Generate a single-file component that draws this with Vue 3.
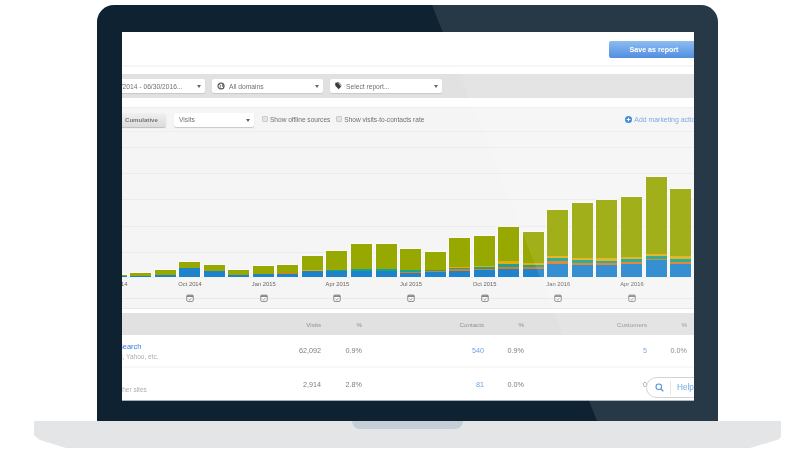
<script setup>
const bars = [
  [2, 1, 0, 0.5, 0], [4.5, 1.5, 0, 0, 0], [7, 2, 0.5, 0, 0], [15, 9.5, 0, 0, 0],
  [12.5, 6, 0.5, 0, 0], [7, 2, 0, 0.5, 0], [11, 3, 0.5, 0, 0], [12.5, 3, 1, 0, 0],
  [21, 6, 0, 0, 1], [26, 6, 0, 1, 0], [33.5, 6.5, 0, 1.5, 0], [33, 6.5, 0, 1.5, 0],
  [28.5, 4.5, 1, 1.5, 0], [25.5, 5, 1, 1.5, 0], [39, 6.5, 1.5, 1.5, 1], [41.5, 7, 1, 2, 1],
  [50.5, 8, 2, 3.5, 2.5], [45, 8, 2, 2, 2], [67.5, 13, 3, 3, 2], [74, 12, 2.5, 2.5, 2],
  [77, 12.5, 1.5, 2.5, 3], [80, 13, 2.5, 2.5, 2.5], [100.5, 17, 1.5, 3, 2], [88.5, 13.5, 1.5, 3, 3]
]
const segments = ['blue', 'orange', 'teal', 'yellow']
const months = ['Jul 2014', 'Oct 2014', 'Jan 2015', 'Apr 2015', 'Jul 2015', 'Oct 2015', 'Jan 2016', 'Apr 2016']
const rows = [
  { name: 'Organic Search', sub: 'Google, Bing, Yahoo, etc.', visits: '62,092', vp: '0.9%', contacts: '540', cp: '0.9%', customers: '5', sp: '0.0%' },
  { name: 'Referrals', sub: 'Links from other sites', visits: '2,914', vp: '2.8%', contacts: '81', cp: '0.0%', customers: '0', sp: '0.0%' }
]
</script>

<template>
  <div class="page">
    <div class="bezel">
      <div class="screen">
        <header class="top">
          <button class="save">Save as report</button>
        </header>
        <div class="hairline"></div>

        <div class="filters">
          <div class="select date"><span>07/01/2014 - 06/30/2016...</span><i class="caret"></i></div>
          <div class="select domains">
            <svg class="ico" viewBox="0 0 10 10">
              <circle cx="5" cy="5" r="3.8" fill="#fff" stroke="#444" stroke-width="1.3" />
              <path d="M2 3.6 C3.4 2.6 4.6 3.6 4.6 4.6 C4.6 5.6 3.4 5.6 3.8 7 L5.2 8.6 M6 2 L7.6 3.4 L6.6 5.2 L8.4 6" fill="none" stroke="#444" stroke-width="1" />
            </svg>
            <span>All domains</span><i class="caret"></i>
          </div>
          <div class="select report">
            <svg class="ico tag" viewBox="0 0 10 10">
              <path d="M1.6 1 L5 1 L9 5.6 L5.8 9 L1.6 4.6 Z" fill="#3d3d3d" />
              <path d="M3.4 0.6 L6.4 0.8 L9.4 4.4" fill="none" stroke="#3d3d3d" stroke-width="0.8" />
            </svg>
            <span>Select report...</span><i class="caret"></i>
          </div>
        </div>

        <div class="controls">
          <button class="cumulative">Cumulative</button>
          <div class="select visits"><span>Visits</span><i class="caret"></i></div>
          <label class="check first"><i class="box"></i>Show offline sources</label>
          <label class="check"><i class="box"></i>Show visits-to-contacts rate</label>
          <a class="add">
            <svg class="plus" viewBox="0 0 10 10">
              <circle cx="5" cy="5" r="5" fill="#2f7fd6" />
              <path d="M5 2.4 V7.6 M2.4 5 H7.6" stroke="#fff" stroke-width="1.5" />
            </svg>
            <span>Add marketing action</span>
          </a>
        </div>
        <div class="spacer"></div>

        <div class="chart">
          <div v-for="(b, i) in bars" :key="i" class="bar" :style="{ height: b[0] + 'px' }">
            <div
              v-for="(s, j) in segments"
              :key="s"
              :class="s"
              :style="{ height: b[j + 1] + 'px' }"
            ></div>
          </div>
        </div>

        <div class="axis">
          <span v-for="m in months" :key="m">{{ m }}</span>
        </div>
        <div class="marks">
          <span v-for="m in months" :key="m">
            <svg class="cal" viewBox="0 0 10 10">
              <path d="M1 2.6 Q1 1.4 2.2 1.4 H7.8 Q9 1.4 9 2.6 V8 Q9 9.2 7.8 9.2 H2.2 Q1 9.2 1 8 Z" fill="#fff" stroke="#777" stroke-width="1.1" />
              <path d="M1 1.8 H9 V3.6 H1 Z" fill="#777" />
              <path d="M3.2 6 L4.6 7.4 L6.9 4.8" fill="none" stroke="#777" stroke-width="1" />
            </svg>
          </span>
        </div>
        <div class="gap"></div>

        <div class="grid head">
          <span></span>
          <span>Visits</span>
          <span>%</span>
          <span>Contacts</span>
          <span>%</span>
          <span>Customers</span>
          <span>%</span>
        </div>
        <div v-for="(r, i) in rows" :key="r.name" class="grid row" :class="{ last: i === 1 }">
          <div class="name">
            <a>{{ r.name }}</a>
            <small>{{ r.sub }}</small>
          </div>
          <span>{{ r.visits }}</span>
          <span>{{ r.vp }}</span>
          <a>{{ r.contacts }}</a>
          <span>{{ r.cp }}</span>
          <a :class="{ grey: r.customers === '0' }">{{ r.customers }}</a>
          <span>{{ r.sp }}</span>
        </div>

        <div class="help">
          <svg class="mag" viewBox="0 0 12 12">
            <circle cx="5" cy="5" r="3.7" fill="none" stroke="#3f86d4" stroke-width="1.4" />
            <path d="M7.8 7.8 L11 11" stroke="#3f86d4" stroke-width="1.7" />
          </svg>
          <i class="sep"></i>
          <span>Help</span>
        </div>
      </div>
      <div class="sheen"></div>
    </div>
    <div class="base"><div class="notch"></div></div>
  </div>
</template>

<style scoped>
.page {
  width: 810px;
  height: 450px;
  box-sizing: border-box;
  padding: 5px 0 0 5px;
  display: flex;
  flex-direction: column;
  align-items: center;
  background: #fff;
  overflow: hidden;
  font-family: "Liberation Sans", Arial, sans-serif;
  color: #777;
}
.bezel {
  position: relative;
  width: 621px;
  height: 416px;
  box-sizing: border-box;
  padding: 27px 24px 20px 25px;
  background: #0f2231;
  border-radius: 17px 17px 0 0;
  overflow: hidden;
}
.sheen {
  position: absolute;
  inset: 0;
  background: rgba(255, 255, 255, 0.1);
  clip-path: polygon(335px 0, 100% 0, 100% 100%, 500px 100%);
  pointer-events: none;
}
.screen {
  position: relative;
  width: 572px;
  height: 369px;
  background: #fff;
  overflow: hidden;
  border-bottom: 1px solid #a9afb4;
  box-sizing: border-box;
  filter: blur(0.5px);
}
.top {
  height: 33px;
  box-sizing: border-box;
  padding-top: 9px;
  display: flex;
  justify-content: flex-end;
}
.save {
  width: 90px;
  height: 17px;
  margin-right: -5px;
  padding: 0;
  border: 0;
  border-radius: 2px;
  background: linear-gradient(#80b5f0, #3f82dc);
  color: #fff;
  font: bold 7.1px "Liberation Sans", Arial, sans-serif;
}
.hairline {
  height: 2px;
  margin-bottom: 7px;
  background: #f6f6f6;
}
.filters {
  height: 24px;
  display: flex;
  align-items: center;
  gap: 7px;
  background: #e1e1e1;
}
.select {
  position: relative;
  height: 14px;
  box-sizing: border-box;
  display: flex;
  align-items: center;
  flex-shrink: 0;
  padding-left: 5px;
  background: #fff;
  border-radius: 2px;
  box-shadow: 0 1px 1px #c8c8c8;
  font-size: 6.7px;
  color: #707070;
  white-space: nowrap;
}
.date {
  width: 125px;
  margin-left: -42px;
  padding-left: 24px;
}
.domains {
  width: 111px;
}
.report {
  width: 112px;
}
.visits {
  width: 80px;
}
.caret {
  position: absolute;
  right: 4px;
  top: 6px;
  border: 2.2px solid transparent;
  border-top: 3px solid #666;
  border-bottom: 0;
}
.ico {
  width: 8px;
  height: 8px;
  margin-right: 4px;
  flex-shrink: 0;
}
.tag {
  margin: 0 4px 0 -1px;
}
.controls {
  height: 25px;
  margin-top: 9px;
  display: flex;
  align-items: center;
  background: #f5f5f5;
  border-top: 1px solid #eeeeee;
  border-bottom: 1px solid #eeeeee;
  box-sizing: border-box;
  font-size: 6.55px;
  white-space: nowrap;
}
.cumulative {
  width: 62px;
  height: 14px;
  margin-left: -18px;
  padding: 0 0 0 21px;
  flex-shrink: 0;
  border: 0;
  border-radius: 2px;
  background: linear-gradient(#f0f0f0, #dcdcdc);
  box-shadow: 0 1px 1px #bcbcbc;
  color: #757575;
  font: bold 6.1px "Liberation Sans", Arial, sans-serif;
  text-align: left;
}
.visits {
  margin-left: 8px;
}
.check {
  display: flex;
  align-items: center;
  color: #707070;
  margin-left: 6px;
}
.check.first {
  margin-left: 8px;
}
.box {
  width: 6px;
  height: 6px;
  margin: -2px 2px 0 0;
  border: 1px solid #cccccc;
  border-radius: 1px;
  background: #e4e4e4;
  box-sizing: border-box;
}
.add {
  display: flex;
  align-items: center;
  margin-left: 201px;
  color: #6f9fe6;
  flex-shrink: 0;
  font-size: 6.9px;
}
.plus {
  width: 7px;
  height: 7px;
  margin-right: 2px;
}
.spacer {
  height: 15px;
  background: #f5f5f5;
}
.chart {
  height: 131px;
  box-sizing: border-box;
  display: flex;
  align-items: flex-end;
  gap: 3.55px;
  background-color: #f5f5f5;
  background-image: repeating-linear-gradient(to bottom, #ebebeb 0, #ebebeb 1px, transparent 1px, transparent 26.2px);
  border-bottom: 1px solid #e8e8e8;
}
.bar {
  flex: 0 0 21px;
  display: flex;
  flex-direction: column-reverse;
  background: #97a800;
  box-shadow: 0 0 0 0.7px rgba(255, 255, 255, 0.65);
}
.bar:first-child {
  margin-left: -16.5px;
}
.blue {
  background: #1f83cc;
}
.orange {
  background: #e07a22;
}
.teal {
  background: #18a58f;
}
.yellow {
  background: #e3ad12;
}
.axis,
.marks {
  display: flex;
  margin-left: -42.4px;
  background: #f5f5f5;
}
.axis span,
.marks span {
  flex: 0 0 73.65px;
  text-align: center;
}
.axis {
  height: 16px;
  box-sizing: border-box;
  padding-top: 3px;
  font-size: 5.8px;
  line-height: 7px;
  color: #666;
}
.marks {
  height: 15px;
  box-sizing: border-box;
  background-image: linear-gradient(#e9e9e9, #e9e9e9);
  background-size: 100% 1px;
  background-position: 0 4px;
  background-repeat: no-repeat;
  border-bottom: 1px solid #e6e6e6;
}
.cal {
  display: block;
  width: 8px;
  height: 8px;
  margin: 0 auto;
}
.gap {
  height: 4px;
}
.grid {
  display: grid;
  grid-template-columns: 158px 41px 41px 122px 40px 123px 40px;
  align-items: center;
  text-align: right;
}
.head {
  height: 22px;
  background: #e1e1e1;
  font-size: 6.2px;
  color: #909090;
}
.row {
  height: 33px;
  font-size: 7.2px;
  color: #7d7d7d;
  border-bottom: 2px solid #f8f8f8;
  box-sizing: border-box;
}
.row.last {
  height: 32px;
  border-bottom: 0;
}
.row a {
  color: #6f9fe6;
}
.row a.grey {
  color: #888;
}
.name {
  margin-left: -37px;
  text-align: left;
  white-space: nowrap;
}
.name a {
  display: block;
  margin: 0 0 2px 5px;
  font-size: 7.4px;
  color: #2f78dc !important;
}
.name small {
  display: block;
  font-size: 6.5px;
  color: #adadad;
}
.help {
  position: absolute;
  left: 524px;
  top: 345px;
  width: 60px;
  height: 21px;
  box-sizing: border-box;
  display: flex;
  align-items: center;
  padding-left: 8px;
  background: #fff;
  border: 1px solid #cfcfcf;
  border-radius: 11px 0 0 11px;
  color: #5f9be0;
  font-size: 8.2px;
}
.mag {
  width: 9px;
  height: 9px;
  flex-shrink: 0;
}
.sep {
  width: 1px;
  height: 14px;
  margin: 0 6px;
  background: #e4e4e4;
  flex-shrink: 0;
}
.base {
  width: 747px;
  height: 27px;
  flex-shrink: 0;
  display: flex;
  justify-content: center;
  background: #e4e5e7;
  clip-path: polygon(0 0, 100% 0, 100% 16px, 745px 18px, 743px 19px, 716px 27px, 32px 27px, 6px 19px, 2px 16px, 0 14px);
}
.notch {
  width: 111px;
  height: 8px;
  background: #c5ced6;
  border-radius: 0 0 8px 8px;
}
</style>
